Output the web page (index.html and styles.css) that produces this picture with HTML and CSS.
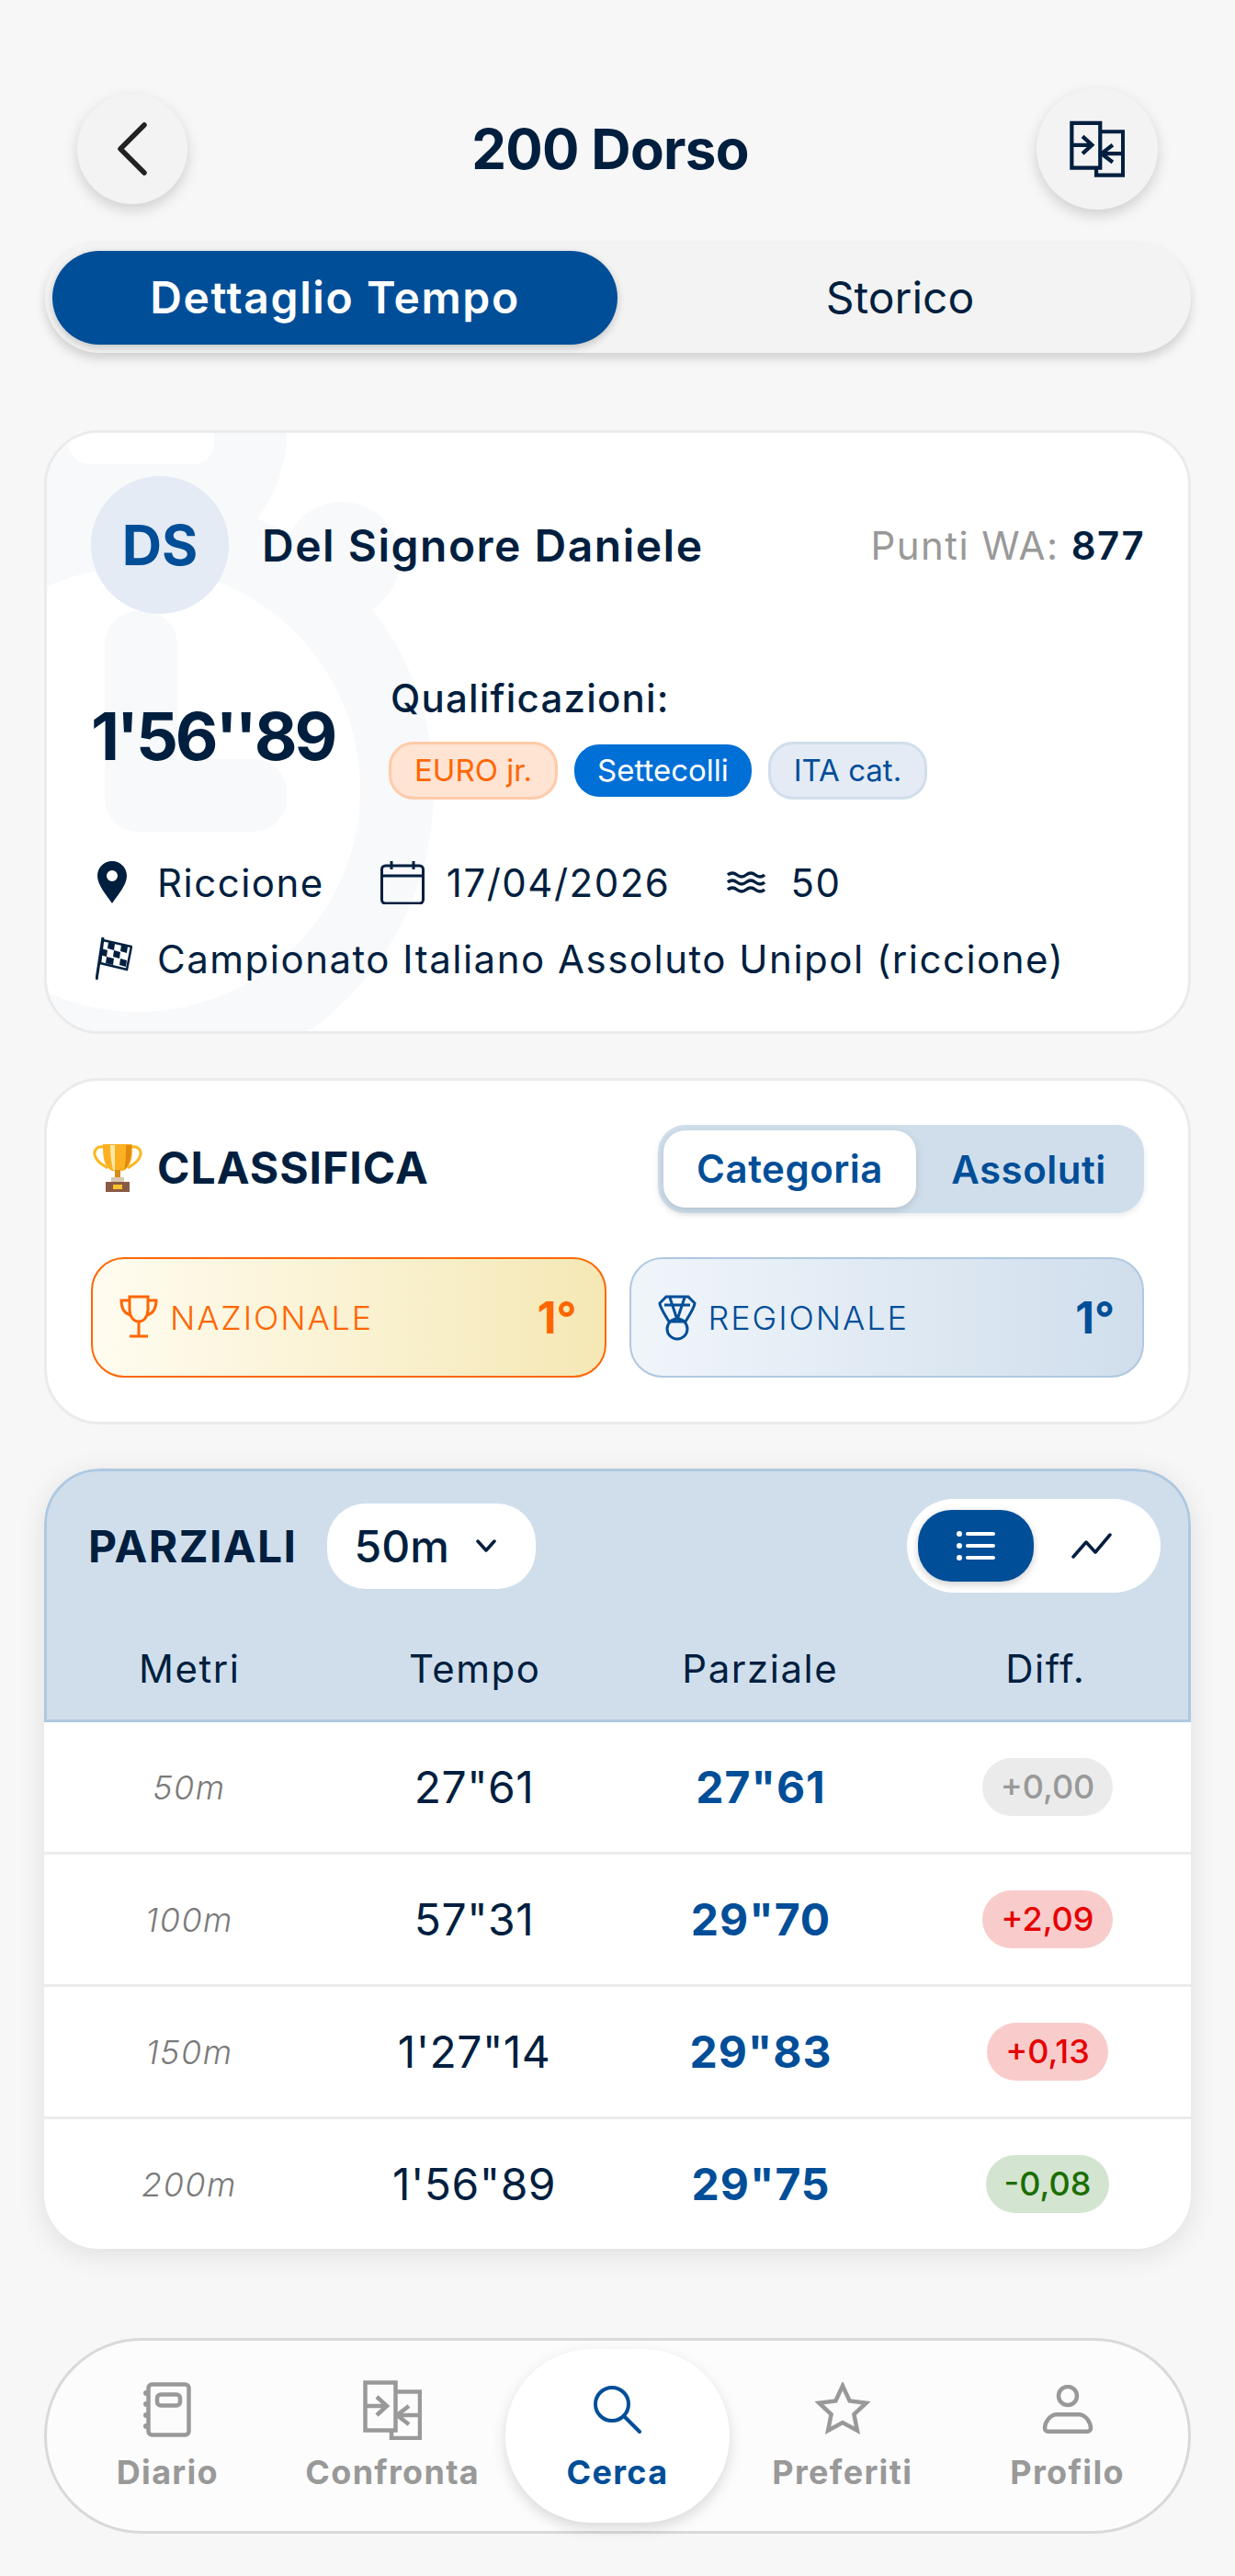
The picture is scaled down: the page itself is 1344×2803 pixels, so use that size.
FILE: index.html
```html
<!DOCTYPE html>
<html lang="it">
  <head>
    <meta charset="UTF-8" />
    <meta name="viewport" content="width=device-width, initial-scale=1.0" />
    <title>200 Dorso</title>
    <link rel="stylesheet" href="styles.css">
  </head>
  <body>
    <div class="top-bar">
      <button class="round-btn back-btn">
        <svg width="34" height="58" viewBox="0 0 34 58" fill="none" stroke="#222" stroke-width="5.500" stroke-linecap="round" stroke-linejoin="round"><path d="M30 3L4 29l26 26"/></svg>
      </button>
      <h1 class="title">200 Dorso</h1>
      <button class="round-btn compare-btn">
        <svg width="60" height="62" viewBox="0 0 64 65" fill="none" stroke="#001f3f" stroke-width="4.500"><path d="M2.500 2.500h33v52h-33z"/><path d="M35.500 12.500H62V63H31v-8.500"/><path d="M2.500 28H26M15 18l11 10-11 10"/><path d="M62 38H37M50 28L37 38l13 10"/></svg>
      </button>
    </div>

    <div class="tabs">
      <div class="tab tab-on">Dettaglio Tempo</div>
      <div class="tab">Storico</div>
    </div>

    <section class="card athlete">
      <!-- big faded stopwatch behind the athlete data -->
      <svg class="watermark" width="430" height="657" viewBox="0 0 430 657" fill="#f7f9fb">
        <path d="M0 0H264C264 40 250 80 223 105L0 120Z"/>
        <circle cx="324" cy="141" r="63"/>
        <circle cx="102" cy="391" r="282" fill="none" stroke="#f7f9fb" stroke-width="80"/>
        <rect x="27" y="-40" width="158" height="77" rx="22" fill="#fff"/>
        <rect x="66" y="197" width="79" height="240" rx="36"/>
        <rect x="66" y="358" width="198" height="79" rx="36"/>
      </svg>

      <div class="athlete-top">
        <div class="avatar">DS</div>
        <div class="athlete-name">Del Signore Daniele</div>
        <div class="points">Punti WA: <b>877</b></div>
      </div>

      <div class="result">
        <div class="big-time">1'56''89</div>
        <div class="qual">
          <div class="qual-label">Qualificazioni:</div>
          <div class="chips">
            <span class="chip chip-euro">EURO jr.</span>
            <span class="chip chip-sette">Settecolli</span>
            <span class="chip chip-ita">ITA cat.</span>
          </div>
        </div>
      </div>

      <div class="info-row">
        <span class="info-item">
          <svg class="pin-icon" width="32" height="46" viewBox="0 0 32 46"><path fill="#001f3f" fill-rule="evenodd" d="M16 0C7 0 0 7 0 16c0 10 10 21 16 30 6-9 16-20 16-30C32 7 25 0 16 0zm0 10a6 6 0 1 1 0 12 6 6 0 0 1 0-12z"/></svg>
          Riccione
        </span>
        <span class="info-item date-item">
          <svg width="48" height="48" viewBox="0 0 48 48" fill="none" stroke="#001f3f" stroke-width="3"><rect x="1.500" y="6" width="45" height="41" rx="4"/><path d="M1.500 17h45M12 1v9M36 1v9"/></svg>
          17/04/2026
        </span>
        <span class="info-item pool-item">
          <svg width="42" height="24" viewBox="0 0 42 24" fill="none" stroke="#001f3f" stroke-width="3.500"><path d="M1 4q5-4 10 0t10 0 10 0 10 0M1 12q5-4 10 0t10 0 10 0 10 0M1 20q5-4 10 0t10 0 10 0 10 0"/></svg>
          50
        </span>
      </div>
      <div class="info-row meet-row">
        <span class="info-item">
          <svg class="flag-icon" width="40" height="48" viewBox="0 0 40 48"><path d="M8 1L1 47" stroke="#001f3f" stroke-width="3" fill="none"/><path d="M8 4l31 7-5 25-29-7z" fill="#fff" stroke="#001f3f" stroke-width="2.500"/><path fill="#001f3f" d="M14 6l7 2-1 7-7-2zM28 9l7 2-1 7-7-2zM6 13l7 2-1 7-7-2zM20 15l7 2-1 7-7-2zM12 22l8 2-1 7-8-2zM27 24l7 2-1 7-7-2z"/></svg>
          Campionato Italiano Assoluto Unipol (riccione)
        </span>
      </div>
    </section>

    <section class="card ranking">
      <div class="ranking-head">
        <div class="ranking-title">
          <svg width="54" height="54" viewBox="0 0 54 54" fill="none">
            <path d="M14 6C4 2 0 10 3 16c2 6 9 9 13 12M40 6c10-4 14 4 11 10-2 6-9 9-13 12" stroke="#f9b81d" stroke-width="3"/>
            <path d="M11 2h32c0 12 0 24-10 29h-12C11 26 11 14 11 2z" fill="#fdb022"/>
            <path d="M19 3h5v27h-2c-2-8-3-18-3-27z" fill="#fde9a8"/>
            <path d="M36 3h6c0 12-1 21-8 27 2-8 2-18 2-27z" fill="#e08a10"/>
            <rect x="24" y="30" width="6" height="11" fill="#d98a17"/>
            <rect x="20" y="38" width="14" height="8" fill="#d8c9b4"/>
            <rect x="14" y="43" width="26" height="11" fill="#8a5a44"/>
            <rect x="22" y="46" width="10" height="5" fill="#fdc12e"/>
          </svg>
          CLASSIFICA
        </div>
        <div class="rank-switch">
          <div class="rank-opt rank-opt-on">Categoria</div>
          <div class="rank-opt">Assoluti</div>
        </div>
      </div>
      <div class="rank-boxes">
        <div class="rank-box rank-naz">
          <svg width="42" height="52" viewBox="0 0 42 52" fill="none" stroke="#ff6600" stroke-width="3"><path d="M11 3h20v14c0 7-4 13-10 13S11 24 11 17zM11 7H2c0 9 3 14 10 16M31 7h9c0 9-3 14-10 16M21 30v15M11 46h20"/></svg>
          <span class="rank-label">NAZIONALE</span>
          <span class="rank-pos">1°</span>
        </div>
        <div class="rank-box rank-reg">
          <svg width="42" height="50" viewBox="0 0 42 50" fill="none" stroke="#004e98" stroke-width="3"><path d="M9 2h24l7 7c0 3-5 12-10 20H12C7 21 2 12 2 9zM7 11h28M13 3l8 24M29 3l-8 24"/><circle cx="21" cy="37" r="11"/></svg>
          <span class="rank-label">REGIONALE</span>
          <span class="rank-pos">1°</span>
        </div>
      </div>
    </section>

    <section class="splits">
      <div class="splits-head">
        <div class="splits-bar">
          <div class="splits-title">PARZIALI</div>
          <div class="metre-select">50m
            <svg width="24" height="14" viewBox="0 0 24 14" fill="none" stroke="#001f3f" stroke-width="3.500" stroke-linecap="round" stroke-linejoin="round"><path d="M3 2l9 10 9-10"/></svg>
          </div>
          <div class="view-switch">
            <div class="view-opt view-opt-on">
              <svg width="42" height="32" viewBox="0 0 42 32" fill="#fff"><circle cx="3" cy="3" r="3"/><circle cx="3" cy="16" r="3"/><circle cx="3" cy="29" r="3"/><rect x="10" y="1" width="32" height="4" rx="2"/><rect x="10" y="14" width="32" height="4" rx="2"/><rect x="10" y="27" width="32" height="4" rx="2"/></svg>
            </div>
            <div class="view-opt">
              <svg class="chart-icon" width="44" height="28" viewBox="0 0 44 28" fill="none" stroke="#001f3f" stroke-width="3.500" stroke-linecap="round" stroke-linejoin="round"><path d="M2 26l14-16 10 11L42 2"/></svg>
            </div>
          </div>
        </div>
        <div class="splits-cols">
          <span>Metri</span><span>Tempo</span><span>Parziale</span><span>Diff.</span>
        </div>
      </div>

      <div class="split-row">
        <span class="s-metre">50m</span><span class="s-time">27"61</span><span class="s-part">27"61</span>
        <span><span class="diff diff-none">+0,00</span></span>
      </div>
      <div class="split-row">
        <span class="s-metre">100m</span><span class="s-time">57"31</span><span class="s-part">29"70</span>
        <span><span class="diff diff-up">+2,09</span></span>
      </div>
      <div class="split-row">
        <span class="s-metre">150m</span><span class="s-time">1'27"14</span><span class="s-part">29"83</span>
        <span><span class="diff diff-up">+0,13</span></span>
      </div>
      <div class="split-row">
        <span class="s-metre">200m</span><span class="s-time">1'56"89</span><span class="s-part">29"75</span>
        <span><span class="diff diff-down">-0,08</span></span>
      </div>
    </section>

    <nav class="bottom-nav">
      <div class="nav-item">
        <div class="nav-icon">
          <svg width="52" height="60" viewBox="0 0 52 60" fill="none" stroke="#999" stroke-width="4.500"><rect x="5.500" y="2.500" width="44" height="55" rx="4"/><rect x="15" y="13.500" width="25" height="12" rx="4"/><g fill="#999" stroke="none"><circle cx="3" cy="12" r="3"/><circle cx="3" cy="24" r="3"/><circle cx="3" cy="36" r="3"/><circle cx="3" cy="48" r="3"/></g></svg>
        </div>
        <span>Diario</span>
      </div>
      <div class="nav-item">
        <div class="nav-icon">
          <svg width="64" height="65" viewBox="0 0 64 65" fill="none" stroke="#999" stroke-width="4.500"><path d="M2.500 2.500h33v52h-33z"/><path d="M35.500 12.500H62V63H31v-8.500"/><path d="M2.500 28H26M15 18l11 10-11 10"/><path d="M62 38H37M50 28L37 38l13 10"/></svg>
        </div>
        <span>Confronta</span>
      </div>
      <div class="nav-item nav-item-on">
        <div class="nav-icon">
          <svg width="52" height="52" viewBox="0 0 52 52" fill="none" stroke="#004e98" stroke-width="4" stroke-linecap="round"><circle cx="20" cy="20" r="18"/><path d="M33 33l17 17"/></svg>
        </div>
        <span>Cerca</span>
      </div>
      <div class="nav-item">
        <div class="nav-icon">
          <svg width="60" height="60" viewBox="0 0 60 60" fill="none" stroke="#999" stroke-width="4.500"><path d="M30 4l7.600 16.500 18.100 2.200L42.400 35l3.500 17.800L30 44 14.100 52.800 17.600 35 4.300 22.700l18.100-2.200z"/></svg>
        </div>
        <span>Preferiti</span>
      </div>
      <div class="nav-item">
        <div class="nav-icon">
          <svg width="56" height="54" viewBox="0 0 56 54" fill="none" stroke="#999" stroke-width="4.500"><circle cx="28" cy="12" r="10"/><path d="M16 32.200h24c7 0 13 8 13 15 0 2-2 3.600-4 3.600H7c-2 0-4-1.600-4-3.600 0-7 6-15 13-15z"/></svg>
        </div>
        <span>Profilo</span>
      </div>
    </nav>
  </body>
</html>
```

FILE: styles.css
```css
* {
  margin: 0;
  padding: 0;
  box-sizing: border-box;
}
body {
  font-family: Inter, "Liberation Sans", sans-serif;
  background-color: #f7f7f7;
  color: #001f3f;
  height: 2803px;
  padding: 96px 48px 0;
  overflow: hidden;
}

/* top bar */
.top-bar {
  display: flex;
  align-items: center;
  justify-content: space-between;
  padding: 0 36px;
  height: 132px;
}
.round-btn {
  display: flex;
  align-items: center;
  justify-content: center;
  border: none;
  border-radius: 50%;
  background-color: #f3f3f3;
  box-shadow: 0 6px 15px rgba(0, 0, 0, 0.16);
}
.back-btn {
  width: 120px;
  height: 120px;
}
.compare-btn {
  width: 132px;
  height: 132px;
}
.title {
  font-size: 60px;
  font-weight: 700;
  letter-spacing: -0.7px;
  margin-right: 4px;
}

/* main tabs */
.tabs {
  display: flex;
  align-items: center;
  height: 120px;
  margin-top: 36px;
  margin-left: 1px;
  padding: 0 9px 0 8px;
  border-radius: 60px;
  background-color: #f3f3f3;
  box-shadow: 0 6px 12px rgba(0, 0, 0, 0.16);
}
.tab {
  flex: 1;
  height: 102px;
  line-height: 102px;
  text-align: center;
  font-size: 48px;
  font-weight: 400;
}
.tab-on {
  flex: none;
  width: 615px;
  border-radius: 51px;
  background-color: #004e98;
  color: #fff;
  font-weight: 600;
  letter-spacing: 1.6px;
  box-shadow: 0 3px 9px rgba(0, 0, 0, 0.2);
}

/* white cards */
.card {
  position: relative;
  overflow: hidden;
  background-color: #fff;
  border: 3px solid #ebebeb;
  border-radius: 60px;
}
.athlete {
  height: 657px;
  margin-top: 84px;
  padding: 47px 47px 0 48px;
}
.watermark {
  position: absolute;
  left: -3px;
  top: -3px;
}
.athlete-top,
.result,
.info-row {
  position: relative;
}
.athlete-top {
  display: flex;
  align-items: center;
}
.avatar {
  width: 150px;
  height: 150px;
  line-height: 150px;
  border-radius: 50%;
  text-align: center;
  background-color: #e4ebf4;
  color: #004e98;
  font-size: 60px;
  font-weight: 700;
}
.athlete-name {
  margin-left: 36px;
  font-size: 48px;
  font-weight: 600;
  letter-spacing: 1.5px;
}
.points {
  margin-left: auto;
  font-size: 42px;
  letter-spacing: 1.4px;
  color: #999;
}
.points b {
  color: #001f3f;
  font-weight: 600;
}
.result {
  display: flex;
  align-items: center;
  margin-top: 63px;
}
.big-time {
  width: 326px;
  font-size: 72px;
  font-weight: 700;
  letter-spacing: -3.2px;
}
.qual {
  padding-top: 3px;
}
.qual-label {
  font-size: 42px;
  font-weight: 500;
  letter-spacing: 1.2px;
}
.chips {
  display: flex;
  align-items: center;
  gap: 18px;
  margin-top: 22px;
  margin-left: -2px;
}
.chip {
  height: 63px;
  line-height: 57px;
  padding: 0 25px;
  border-radius: 27px;
  border: 3px solid;
  font-size: 33px;
}
.chip-euro {
  background-color: #ffe3d3;
  border-color: #ffcba8;
  color: #ff6600;
}
.chip-sette {
  height: 57px;
  line-height: 57px;
  border: none;
  background-color: #006fd6;
  color: #fff;
}
.chip-ita {
  background-color: #e4ebf4;
  border-color: #d0deec;
  color: #004e98;
}
.info-row {
  display: flex;
  align-items: center;
  height: 50px;
  margin-top: 65px;
  font-size: 42px;
  letter-spacing: 1.5px;
}
.info-item {
  display: flex;
  align-items: center;
}
.meet-row {
  margin-top: 33px;
}
.pin-icon {
  margin: 0 33px 0 7px;
}
.flag-icon {
  margin: 0 27px 0 5px;
}
.date-item {
  margin-left: 61px;
}
.date-item svg {
  margin-right: 24px;
}
.pool-item {
  margin-left: 62px;
}
.pool-item svg {
  margin-right: 27px;
}

/* ranking card */
.ranking {
  height: 377px;
  margin-top: 48px;
  padding: 48px 48px 0;
}
.ranking-head {
  display: flex;
  align-items: center;
  justify-content: space-between;
  height: 96px;
}
.ranking-title {
  display: flex;
  align-items: center;
  gap: 16px;
  margin-left: 2px;
  margin-bottom: 4px;
  font-size: 48px;
  font-weight: 700;
  letter-spacing: 1px;
}
.rank-switch {
  display: flex;
  align-items: center;
  width: 529px;
  height: 96px;
  padding: 0 3px 0 6px;
  border-radius: 30px;
  background-color: #d0deec;
  box-shadow: 0 3px 6px rgba(0, 0, 0, 0.08);
}
.rank-opt {
  flex: 1;
  text-align: center;
  font-size: 42px;
  font-weight: 600;
  letter-spacing: 0.5px;
  color: #004e98;
}
.rank-opt-on {
  flex: none;
  width: 275px;
  height: 84px;
  line-height: 84px;
  border-radius: 24px;
  background-color: #fff;
  box-shadow: 0 3px 9px rgba(0, 0, 0, 0.14);
}
.rank-boxes {
  display: flex;
  gap: 25px;
  margin-top: 48px;
}
.rank-box {
  flex: 1;
  display: flex;
  align-items: center;
  height: 131px;
  padding: 0 30px 0 29px;
  border-radius: 36px;
  border: 2px solid;
}
.rank-label {
  margin-left: 13px;
  font-size: 36px;
  font-weight: 300;
  letter-spacing: 1.9px;
}
.rank-pos {
  margin-left: auto;
  font-size: 48px;
  font-weight: 700;
}
.rank-naz {
  border-color: #ff6600;
  color: #ff6600;
  background: linear-gradient(90deg, #fffcf0, #f5e8b5);
}
.rank-reg {
  border-color: #afc8e0;
  color: #004e98;
  background: linear-gradient(90deg, #f0f5fa, #d0deec);
}

/* splits table */
.splits {
  height: 849px;
  margin-top: 48px;
  overflow: hidden;
  border-radius: 60px;
  background-color: #fff;
  box-shadow: 0 6px 30px rgba(0, 0, 0, 0.1);
}
.splits-head {
  height: 276px;
  border: 3px solid #afc8e0;
  border-radius: 60px 60px 0 0;
  background-color: #d0deec;
}
.splits-bar {
  display: flex;
  align-items: center;
  height: 162px;
  padding: 0 30px 0 45px;
}
.splits-title {
  font-size: 48px;
  font-weight: 700;
  letter-spacing: 1.4px;
}
.metre-select {
  display: flex;
  align-items: center;
  gap: 28px;
  height: 93px;
  margin-left: 33px;
  padding: 0 42px 0 29px;
  border-radius: 42px;
  background-color: #fff;
  font-size: 48px;
  font-weight: 500;
}
.view-switch {
  display: flex;
  align-items: center;
  width: 276px;
  height: 102px;
  margin-left: auto;
  padding-left: 12px;
  border-radius: 51px;
  background-color: #fff;
}
.view-opt {
  display: flex;
  align-items: center;
  justify-content: center;
  flex: 1;
}
.chart-icon {
  margin-right: 12px;
}
.view-opt-on {
  flex: none;
  width: 126px;
  height: 78px;
  border-radius: 36px;
  background-color: #004e98;
  box-shadow: 0 3px 9px rgba(0, 0, 0, 0.2);
}
.splits-cols,
.split-row {
  display: grid;
  grid-template-columns: repeat(4, 1fr);
  align-items: center;
  text-align: center;
}
.splits-cols {
  font-size: 42px;
  letter-spacing: 1.5px;
  height: 104px;
}
.split-row {
  height: 144px;
  border-bottom: 3px solid #ececec;
}
.split-row:last-child {
  height: 141px;
  border-bottom: none;
}
.s-metre {
  padding-left: 4px;
  font-size: 36px;
  font-style: italic;
  font-weight: 300;
  color: #7a7a7a;
  letter-spacing: 1.5px;
}
.s-time {
  font-size: 48px;
  letter-spacing: 0.5px;
}
.s-part {
  font-size: 48px;
  font-weight: 700;
  letter-spacing: 1px;
  color: #004e98;
}
.diff {
  display: inline-block;
  height: 63px;
  line-height: 63px;
  padding: 0 20px;
  border-radius: 32px;
  font-size: 36px;
  font-weight: 500;
}
.diff-none {
  background-color: #ebebeb;
  color: #999;
}
.diff-up {
  background-color: #f9cccc;
  color: #e60000;
}
.diff-down {
  background-color: #d3e4d0;
  color: #1a6e00;
}

/* bottom nav */
.bottom-nav {
  display: flex;
  align-items: center;
  height: 213px;
  margin-top: 97px;
  padding: 0 9px;
  border: 3px solid #d9d9d9;
  border-radius: 106px;
  background-color: #fcfcfc;
}
.nav-item {
  flex: 1;
  display: flex;
  flex-direction: column;
  align-items: center;
  justify-content: center;
  gap: 13px;
  height: 189px;
  line-height: 44px;
  font-size: 36px;
  font-weight: 700;
  letter-spacing: 1.3px;
  color: #999;
}
.nav-icon {
  display: flex;
  align-items: center;
  justify-content: center;
  height: 66px;
}
.nav-item-on {
  border-radius: 94px;
  background-color: #fff;
  color: #004e98;
  box-shadow: 0 6px 15px rgba(0, 0, 0, 0.14);
}
```
